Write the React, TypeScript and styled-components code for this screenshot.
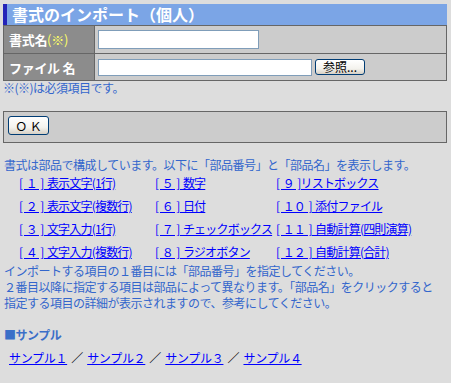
import styled, { createGlobalStyle } from "styled-components";

const GlobalStyle = createGlobalStyle`
  body {
    margin: 0;
    background: #dddddd;
    font-family: "Noto Sans CJK JP", "Liberation Sans", sans-serif;
    font-size: 12px;
  }
`;

const Page = styled.div`
  padding: 4px 4px 0 3px;
`;

const TitleBar = styled.h1`
  margin: 0;
  height: 21px;
  line-height: 21px;
  padding-left: 5px;
  border-left: 4px solid #2424b8;
  background: #7ba5e6;
  color: #ffffff;
  font-size: 16px;
  font-weight: bold;
`;

const FormGrid = styled.div`
  display: grid;
  grid-template-columns: 90px 1fr;
  grid-template-rows: 27px 26px;
  gap: 1px;
  padding: 1px;
  background: #666666;
`;

const LabelCell = styled.div`
  display: flex;
  align-items: center;
  padding-left: 5px;
  background: #8c8c8c;
  color: #ffffff;
  font-size: 13px;
  font-weight: bold;
  letter-spacing: -0.3px;
`;

const Required = styled.span`
  color: #ffff66;
  font-weight: normal;
`;

const ValueCell = styled.div`
  display: flex;
  align-items: center;
  gap: 3px;
  padding-left: 3px;
  background: #cccccc;
`;

const TextInput = styled.input<{ $w: number; $h: number }>`
  box-sizing: border-box;
  width: ${(p) => p.$w}px;
  height: ${(p) => p.$h}px;
  margin: 0;
  border: 1px solid #7f9db9;
  background: #ffffff;
  font-size: 12px;
`;

const XpButton = styled.button<{ $w: number; $h: number }>`
  box-sizing: border-box;
  width: ${(p) => p.$w}px;
  height: ${(p) => p.$h}px;
  margin: 0;
  padding: 0;
  border: 1px solid #003c74;
  border-radius: 3px;
  background: linear-gradient(#ffffff, #f4f3ee 60%, #d6d0c5);
  color: #000000;
  font-family: "Noto Sans CJK JP", sans-serif;
  font-size: 12px;
  line-height: 1;
`;

const Note = styled.p`
  margin: 0;
  height: 14px;
  line-height: 14px;
  color: #3366cc;
  letter-spacing: -0.5px;
`;

const ActionBox = styled.div`
  margin-top: 16px;
  height: 26px;
  padding: 4px 0 0 4px;
  box-sizing: content-box;
  border: 1px solid #666666;
  background: #cccccc;
`;

const Description = styled.p`
  margin: 16px 0 0 1px;
  line-height: 12px;
  color: #3366cc;
  letter-spacing: -0.5px;
`;

const PartsGrid = styled.div`
  display: grid;
  grid-template-columns: 136px 121px auto;
  grid-auto-rows: 23px;
  align-items: center;
  padding-left: 16px;
`;

const PartLink = styled.a`
  color: #0000ff;
  text-decoration: underline;
  letter-spacing: -0.8px;
  word-spacing: 1.5px;
  white-space: pre;
  cursor: pointer;
`;

const SampleLink = styled(PartLink)`
  letter-spacing: -0.3px;
`;

const Guide = styled.p`
  margin: 0 0 0 1px;
  line-height: 16px;
  color: #3366cc;
  letter-spacing: -0.5px;
`;

const SampleHeading = styled.h2`
  margin: 16px 0 0 1px;
  font-size: 12px;
  line-height: 16px;
  font-weight: bold;
  color: #3b6fc8;
  letter-spacing: -0.5px;
`;

const SampleRow = styled.div`
  display: flex;
  align-items: center;
  gap: 4px;
  margin: 7px 0 0 6px;
  line-height: 16px;
`;

const Slash = styled.span`
  margin-right: 4px;
  color: #000000;
`;

const parts = [
  "[ １ ] 表示文字(1行)",
  "[ ５ ] 数字",
  "[ ９ ]リストボックス",
  "[ ２ ] 表示文字(複数行)",
  "[ ６ ] 日付",
  "[ １０ ] 添付ファイル",
  "[ ３ ] 文字入力(1行)",
  "[ ７ ] チェックボックス",
  "[ １１ ] 自動計算(四則演算)",
  "[ ４ ] 文字入力(複数行)",
  "[ ８ ] ラジオボタン",
  "[ １２ ] 自動計算(合計)",
];

const samples = ["サンプル１", "サンプル２", "サンプル３", "サンプル４"];

export default function App() {
  return (
    <Page>
      <GlobalStyle />
      <TitleBar>書式のインポート（個人）</TitleBar>
      <FormGrid>
        <LabelCell>
          書式名<Required>(※)</Required>
        </LabelCell>
        <ValueCell>
          <TextInput $w={161} $h={19} />
        </ValueCell>
        <LabelCell>ファイル 名</LabelCell>
        <ValueCell>
          <TextInput $w={214} $h={17} />
          <XpButton $w={50} $h={16}>参照...</XpButton>
        </ValueCell>
      </FormGrid>
      <Note>※(※)は必須項目です。</Note>
      <ActionBox>
        <XpButton $w={41} $h={19}>Ｏ Ｋ</XpButton>
      </ActionBox>
      <Description>
        書式は部品で構成しています。以下に「部品番号」と「部品名」を表示します。
      </Description>
      <PartsGrid>
        {parts.map((p) => (
          <div key={p}>
            <PartLink>{p}</PartLink>
          </div>
        ))}
      </PartsGrid>
      <Guide>
        インポートする項目の１番目には「部品番号」を指定してください。
        <br />
        ２番目以降に指定する項目は部品によって異なります。「部品名」をクリックすると
        <br />
        指定する項目の詳細が表示されますので、参考にしてください。
      </Guide>
      <SampleHeading>■サンプル</SampleHeading>
      <SampleRow>
        {samples.map((s, i) => (
          <span key={s}>
            {i > 0 && <Slash>／</Slash>}
            <SampleLink>{s}</SampleLink>
          </span>
        ))}
      </SampleRow>
    </Page>
  );
}
